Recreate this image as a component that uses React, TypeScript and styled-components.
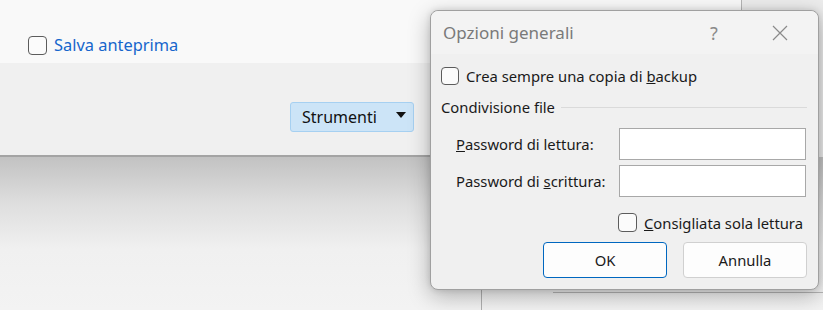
import React from 'react';
import styled, { createGlobalStyle } from 'styled-components';

const GlobalStyle = createGlobalStyle`
  html, body {
    margin: 0;
    padding: 0;
    background: #ececec;
  }
  body {
    font-family: "Noto Sans", "Open Sans", sans-serif;
    color: #1a1a1a;
  }
`;

const Desktop = styled.div`
  position: relative;
  width: 823px;
  height: 310px;
  overflow: hidden;
  display: flex;
  flex-direction: column;
  background: #ececec;
`;

// the save-as window sitting behind the dialog
const BackWindow = styled.div`
  width: 741px;
  display: flex;
  flex-direction: column;
  border-right: 1px solid #b4b4b4;
  border-bottom: 2px solid #a4a4a4;
`;

const OptionsStrip = styled.div`
  height: 63px;
  box-sizing: border-box;
  padding: 35px 0 0 28px;
  background: #f9f9f9;
`;

const ToolStrip = styled.div`
  height: 92px;
  box-sizing: border-box;
  padding: 39px 0 0 290px;
  background: #f0f0f0;
`;

const CheckRow = styled.label`
  display: flex;
  align-items: center;
  gap: 7px;
  cursor: default;
`;

const Box = styled.span<{ $size?: number }>`
  width: ${p => p.$size ?? 18}px;
  height: ${p => p.$size ?? 18}px;
  box-sizing: border-box;
  border: 1px solid #5c5c5c;
  border-radius: 4px;
  background: #fbfbfb;
  flex-shrink: 0;
`;

const LinkText = styled.span`
  font-size: 16.4px;
  color: #1666cc;
  line-height: 20px;
`;

const ToolsButton = styled.div`
  width: 124px;
  height: 30px;
  box-sizing: border-box;
  display: flex;
  align-items: center;
  justify-content: space-between;
  padding: 0 7px 1px 11px;
  background: #cce4f7;
  border: 1px solid #a6d0f1;
  border-radius: 3px;
  font-size: 16px;
  color: #111;
`;

const Caret = styled.span`
  width: 0;
  height: 0;
  border-left: 5px solid transparent;
  border-right: 5px solid transparent;
  border-top: 6px solid #111;
  margin-top: -3px;
`;

const ShadowBand = styled.div`
  flex: 1;
  position: relative;
  background: linear-gradient(#c2c2c2 0%, #dedede 30%, #f0f0f0 60%, #f3f3f3 100%);
`;

// edges of another window, mostly hidden below the dialog
const PaneEdge = styled.div`
  position: absolute;
  left: 481px;
  top: 132px;
  bottom: 0;
  width: 1px;
  background: #b0b0b0;
`;

const PaneRule = styled.div`
  position: absolute;
  left: 553px;
  right: 0;
  top: 135px;
  height: 1px;
  background: #b8b8b8;
`;

const Dialog = styled.div`
  position: absolute;
  left: 430px;
  top: 10px;
  width: 389px;
  height: 280px;
  box-sizing: border-box;
  border: 1px solid #a0a0a0;
  border-radius: 8px;
  background: #f0f0f0;
  box-shadow: 0 6px 22px rgba(0, 0, 0, 0.28), 0 0 6px rgba(0, 0, 0, 0.12);
  display: flex;
  flex-direction: column;
`;

const TitleBar = styled.div`
  height: 43px;
  display: flex;
  align-items: center;
  padding-left: 12px;
  border-radius: 8px 8px 0 0;
  background: #f3f3f3;
`;

const Title = styled.div`
  flex: 1;
  font-size: 17px;
  color: #7a7a7a;
`;

const TitleGlyph = styled.div<{ $w: number }>`
  width: ${p => p.$w}px;
  height: 43px;
  display: flex;
  align-items: center;
  justify-content: center;
  color: #8a8a8a;
  font-size: 18px;
`;

const Body = styled.div`
  display: flex;
  flex-direction: column;
  padding: 13px 11px 0 10px;
  font-size: 14.8px;
`;

const BodyText = styled.span`
  font-size: 14.8px;
  color: #1a1a1a;
  line-height: 18px;
`;

const GroupHead = styled.div`
  display: flex;
  align-items: center;
  gap: 6px;
  margin-top: 12px;
  font-size: 14.8px;
  color: #1a1a1a;
`;

const GroupLine = styled.div`
  flex: 1;
  height: 1px;
  background: #dadada;
  margin-top: 1px;
`;

const FieldGrid = styled.div`
  display: grid;
  grid-template-columns: 163px 187px;
  row-gap: 5px;
  align-items: center;
  margin-top: 11px;
  padding-left: 15px;
`;

const Field = styled.div`
  height: 32px;
  box-sizing: border-box;
  border: 1px solid #a8a8a8;
  background: #fff;
`;

const ReadOnlyRow = styled.div`
  display: flex;
  justify-content: flex-end;
  margin-top: 16px;
  padding-right: 4px;
`;

const ButtonRow = styled.div`
  display: flex;
  justify-content: flex-end;
  gap: 16px;
  margin-top: 10px;
`;

const Button = styled.div<{ $primary?: boolean }>`
  width: 124px;
  height: 36px;
  box-sizing: border-box;
  display: flex;
  align-items: center;
  justify-content: center;
  background: #fdfdfd;
  border: 1px solid ${p => (p.$primary ? '#0067c0' : '#d0d0d0')};
  border-radius: 4px;
  font-size: 14.8px;
  color: #1a1a1a;
`;

const CloseIcon = () => (
  <svg width="16" height="16" viewBox="0 0 16 16">
    <path d="M1 1 L15 15 M15 1 L1 15" stroke="#8a8a8a" strokeWidth="1.2" fill="none" />
  </svg>
);

export default function App() {
  return (
    <Desktop>
      <GlobalStyle />
      <BackWindow>
        <OptionsStrip>
          <CheckRow>
            <Box $size={19} />
            <LinkText>Salva anteprima</LinkText>
          </CheckRow>
        </OptionsStrip>
        <ToolStrip>
          <ToolsButton>
            Strumenti
            <Caret />
          </ToolsButton>
        </ToolStrip>
      </BackWindow>
      <ShadowBand>
        <PaneEdge />
        <PaneRule />
      </ShadowBand>

      <Dialog>
        <TitleBar>
          <Title>Opzioni generali</Title>
          <TitleGlyph $w={72}>?</TitleGlyph>
          <TitleGlyph $w={60}>
            <CloseIcon />
          </TitleGlyph>
          <TitleGlyph $w={8} />
        </TitleBar>
        <Body>
          <CheckRow>
            <Box />
            <BodyText>
              Crea sempre una copia di <u>b</u>ackup
            </BodyText>
          </CheckRow>
          <GroupHead>
            Condivisione file
            <GroupLine />
          </GroupHead>
          <FieldGrid>
            <BodyText>
              <u>P</u>assword di lettura:
            </BodyText>
            <Field />
            <BodyText>
              Password di <u>s</u>crittura:
            </BodyText>
            <Field />
          </FieldGrid>
          <ReadOnlyRow>
            <CheckRow>
              <Box $size={19} />
              <BodyText>
                <u>C</u>onsigliata sola lettura
              </BodyText>
            </CheckRow>
          </ReadOnlyRow>
          <ButtonRow>
            <Button $primary>OK</Button>
            <Button>Annulla</Button>
          </ButtonRow>
        </Body>
      </Dialog>
    </Desktop>
  );
}
